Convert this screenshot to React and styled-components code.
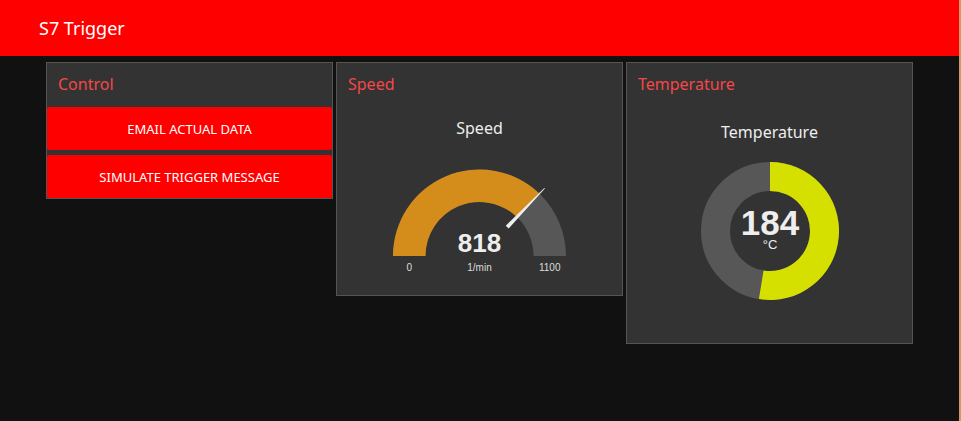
import React from 'react';
import styled, { createGlobalStyle } from 'styled-components';

const GlobalStyle = createGlobalStyle`
  html, body {
    margin: 0;
    padding: 0;
    background: #111111;
    font-family: 'Noto Sans', 'Open Sans', sans-serif;
  }
`;

const Page = styled.div`
  min-height: 421px;
  box-sizing: border-box;
  border-right: 2px solid #d09a68;
`;

const Toolbar = styled.header`
  height: 56px;
  display: flex;
  align-items: center;
  padding-left: 39px;
  background: #ff0000;
  color: #ffffff;
  font-size: 18px;
`;

const Groups = styled.main`
  display: flex;
  align-items: flex-start;
  gap: 3px;
  padding: 6px 0 0 46px;
`;

const Card = styled.section`
  width: 287px;
  box-sizing: border-box;
  background: #333333;
  border: 1px solid #555555;
`;

const CardTitle = styled.div`
  height: 44px;
  box-sizing: border-box;
  display: flex;
  align-items: center;
  padding: 0 11px 2px;
  font-size: 16px;
  color: #f34848;
`;

const CardBody = styled.div`
  height: ${(p) => p.$height}px;
  box-sizing: border-box;
  padding-top: ${(p) => p.$top}px;
`;

const ActionButton = styled.button`
  display: block;
  width: 100%;
  height: 43px;
  margin: 0 0 5px;
  border: none;
  border-radius: 2px;
  background: #ff0000;
  color: #ffffff;
  font-family: inherit;
  font-size: 13px;
  text-transform: uppercase;
  cursor: pointer;
  &:last-child {
    margin-bottom: 0;
  }
`;

const WidgetTitle = styled.div`
  text-align: center;
  font-size: 16px;
  line-height: 23px;
  color: #eeeeee;
`;

const Drawing = styled.svg`
  display: block;
`;

const pt = (cx, cy, r, a) => {
  const rad = (a * Math.PI) / 180;
  return [cx + r * Math.cos(rad), cy - r * Math.sin(rad)];
};

// half ring from angle a0 down to a1 (degrees, 180 = left, 0 = right)
function halfRing(cx, cy, r0, r1, a0, a1) {
  const [x1, y1] = pt(cx, cy, r1, a0);
  const [x2, y2] = pt(cx, cy, r1, a1);
  const [x3, y3] = pt(cx, cy, r0, a1);
  const [x4, y4] = pt(cx, cy, r0, a0);
  const large = a0 - a1 > 180 ? 1 : 0;
  return `M${x1} ${y1} A${r1} ${r1} 0 ${large} 1 ${x2} ${y2} L${x3} ${y3} A${r0} ${r0} 0 ${large} 0 ${x4} ${y4} Z`;
}

function Gauge({ value, min, max, units }) {
  const cx = 142.5;
  const cy = 116;
  const r1 = 86.5;
  const r0 = 54;
  const frac = (value - min) / (max - min);
  const a = 180 - 180 * frac;
  const rad = (a * Math.PI) / 180;
  const u = [Math.cos(rad), -Math.sin(rad)];
  const n = [Math.sin(rad), Math.cos(rad)];
  const base = [cx + u[0] * 40, cy + u[1] * 40];
  const tip = [cx + u[0] * 94, cy + u[1] * 94];
  const needle = [
    [base[0] + n[0] * 2, base[1] + n[1] * 2],
    [tip[0] + n[0] * 0.4, tip[1] + n[1] * 0.4],
    [tip[0] - n[0] * 0.4, tip[1] - n[1] * 0.4],
    [base[0] - n[0] * 2, base[1] - n[1] * 2],
  ]
    .map((p) => p.join(','))
    .join(' ');

  return (
    <Drawing width="285" height="150" viewBox="0 0 285 150">
      <path d={halfRing(cx, cy, r0, r1, 180, 0)} fill="#575757" />
      <path d={halfRing(cx, cy, r0, r1, 180, a)} fill="#d48d1b" />
      <polygon points={needle} fill="#eeeeee" />
      <text x={cx} y="112" textAnchor="middle" fill="#eeeeee" fontFamily="Liberation Sans, Arial, sans-serif" fontWeight="700" fontSize="26">
        {value}
      </text>
      <g fill="#dddddd" fontFamily="Liberation Sans, Arial, sans-serif" fontSize="10" textAnchor="middle">
        <text x={cx - (r0 + r1) / 2} y="131">{min}</text>
        <text x={cx} y="131">{units}</text>
        <text x={cx + (r0 + r1) / 2} y="131">{max}</text>
      </g>
    </Drawing>
  );
}

function Donut({ value, max, units }) {
  const cx = 143;
  const cy = 87;
  const r1 = 69;
  const r0 = 40;
  const phi = (value / max) * 360;
  const p = (r, f) => {
    const rad = (f * Math.PI) / 180;
    return [cx + r * Math.sin(rad), cy - r * Math.cos(rad)];
  };
  const [x1, y1] = p(r1, 0);
  const [x2, y2] = p(r1, phi);
  const [x3, y3] = p(r0, phi);
  const [x4, y4] = p(r0, 0);
  const large = phi > 180 ? 1 : 0;
  const d = `M${x1} ${y1} A${r1} ${r1} 0 ${large} 1 ${x2} ${y2} L${x3} ${y3} A${r0} ${r0} 0 ${large} 0 ${x4} ${y4} Z`;

  return (
    <Drawing width="285" height="160" viewBox="0 0 285 160">
      <circle cx={cx} cy={cy} r={(r0 + r1) / 2} fill="none" stroke="#575757" strokeWidth={r1 - r0} />
      <path d={d} fill="#d6e000" />
      <text x={cx} y="91" textAnchor="middle" fill="#eeeeee" fontFamily="Liberation Sans, Arial, sans-serif" fontWeight="700" fontSize="35">
        {value}
      </text>
      <text x={cx} y="105" textAnchor="middle" fill="#eeeeee" fontFamily="Liberation Sans, Arial, sans-serif" fontSize="13">
        {units}
      </text>
    </Drawing>
  );
}

export default function App() {
  return (
    <Page>
      <GlobalStyle />
      <Toolbar>S7 Trigger</Toolbar>
      <Groups>
        <Card>
          <CardTitle>Control</CardTitle>
          <ActionButton>Email actual data</ActionButton>
          <ActionButton>Simulate trigger message</ActionButton>
        </Card>
        <Card>
          <CardTitle>Speed</CardTitle>
          <CardBody $height={188} $top={10}>
            <WidgetTitle>Speed</WidgetTitle>
            <Gauge value={818} min={0} max={1100} units="1/min" />
          </CardBody>
        </Card>
        <Card>
          <CardTitle>Temperature</CardTitle>
          <CardBody $height={236} $top={14}>
            <WidgetTitle>Temperature</WidgetTitle>
            <Donut value={184} max={350} units="°C" />
          </CardBody>
        </Card>
      </Groups>
    </Page>
  );
}
